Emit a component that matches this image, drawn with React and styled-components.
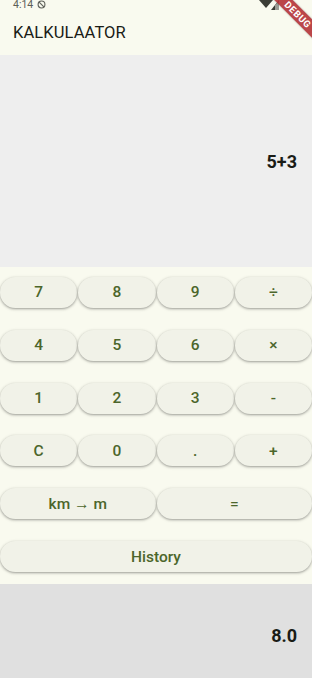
import React from 'react'
import styled, { createGlobalStyle } from 'styled-components'

const Global = createGlobalStyle`
  html, body {
    margin: 0;
    padding: 0;
    background: #f9faef;
  }
  * {
    box-sizing: border-box;
  }
`

const Screen = styled.div`
  position: relative;
  width: 312px;
  height: 678px;
  overflow: hidden;
  display: flex;
  flex-direction: column;
  background: #f9faef;
  font-family: Roboto, 'Noto Sans', sans-serif;
`

const Header = styled.header`
  height: 55px;
  display: flex;
  flex-direction: column;
  background: #f9faef;
`

const StatusBar = styled.div`
  height: 18px;
  display: flex;
  align-items: flex-start;
  justify-content: space-between;
  padding: 0 31px 0 13px;
  color: #5d5f58;
  font-size: 10.5px;
  line-height: 9px;
`

const StatusLeft = styled.div`
  display: flex;
  align-items: center;
  gap: 4px;
`

const Title = styled.h1`
  margin: 0;
  padding: 0 13px;
  font-size: 16.5px;
  font-weight: 400;
  line-height: 30px;
  color: #1a1c16;
  letter-spacing: 0.1px;
`

const Display = styled.div`
  display: flex;
  align-items: center;
  justify-content: flex-end;
  padding-right: 15px;
  height: ${({ $h }) => $h}px;
  padding-top: ${({ $shift }) => $shift || 0}px;
  background: ${({ $bg }) => $bg};
  font-size: 18px;
  font-weight: 700;
  color: #1a1c16;
  flex: ${({ $grow }) => ($grow ? 1 : 'none')};
`

const Pad = styled.div`
  height: 317px;
  display: grid;
  grid-template-rows: repeat(6, 1fr);
`

const Row = styled.div`
  display: flex;
  align-items: center;
  gap: 1px;
  padding-bottom: 2px;
`

const Key = styled.button`
  flex: ${({ $span }) => $span || 1};
  height: 31px;
  border: none;
  border-radius: 16px;
  background: #f1f2e8;
  color: #4c662b;
  font-family: Roboto, 'Noto Sans', sans-serif;
  font-size: 15.5px;
  font-weight: 500;
  box-shadow: 0 1px 2px rgba(0, 0, 0, 0.25), 0 1px 3px 1px rgba(0, 0, 0, 0.1);
  padding: 0;
  cursor: pointer;
`

const Banner = styled.div`
  position: absolute;
  left: 238px;
  top: 8px;
  width: 120px;
  height: 13px;
  transform: rotate(45deg);
  background: rgba(176, 38, 44, 0.85);
  color: #fff;
  font-size: 9.5px;
  font-weight: 700;
  line-height: 13px;
  text-align: center;
  letter-spacing: 0.6px;
  box-shadow: 0 0 2px rgba(0, 0, 0, 0.3);
`

const rows = [
  ['7', '8', '9', '÷'],
  ['4', '5', '6', '×'],
  ['1', '2', '3', '-'],
  ['C', '0', '.', '+'],
]

const DndIcon = () => (
  <svg width="9" height="9" viewBox="0 0 10 10">
    <circle cx="5" cy="5" r="3.8" fill="none" stroke="#5d5f58" strokeWidth="1.2" />
    <path d="M2.4 2.4 L7.6 7.6" stroke="#5d5f58" strokeWidth="1.2" />
  </svg>
)

const NetIcons = () => (
  <svg width="22" height="10" viewBox="0 0 22 10">
    <path d="M0 0 L14 0 L7 8 Z" fill="#3b3d36" />
    <path d="M20 0 L20 10 L12 10 Z" fill="#3b3d36" />
    <path d="M16 5 L16 10 L20 10 L20 1 Z" fill="#9a9c94" />
  </svg>
)

const App = () => {
  return (
    <Screen>
      <Global />
      <Header>
        <StatusBar>
          <StatusLeft>
            <span>4:14</span>
            <DndIcon />
          </StatusLeft>
          <NetIcons />
        </StatusBar>
        <Title>KALKULAATOR</Title>
      </Header>
      <Display $h={212} $bg="#eeeeee">5+3</Display>
      <Pad>
        {rows.map((r, i) => (
          <Row key={i}>
            {r.map((k) => (
              <Key key={k}>{k}</Key>
            ))}
          </Row>
        ))}
        <Row>
          <Key>km → m</Key>
          <Key>=</Key>
        </Row>
        <Row>
          <Key>History</Key>
        </Row>
      </Pad>
      <Display $grow $bg="#e0e0e0" $shift={8}>8.0</Display>
      <Banner>DEBUG</Banner>
    </Screen>
  )
}

export default App
